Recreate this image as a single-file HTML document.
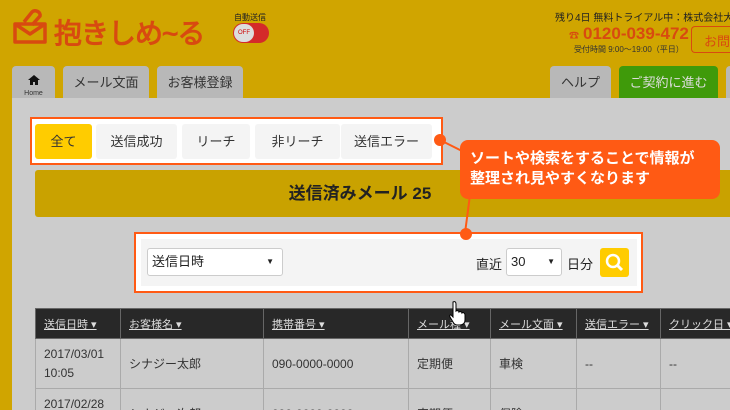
<!DOCTYPE html><html><head><meta charset="utf-8"><style>
*{box-sizing:border-box;margin:0;padding:0}
html,body{width:730px;height:410px;overflow:hidden}
body{background:#d0a500;font-family:"Liberation Sans","Noto Sans CJK JP",sans-serif;position:relative;color:#222}
.a{position:absolute}
.tab{position:absolute;top:66px;height:33px;background:#b8b8b8;border-radius:4px 4px 0 0;font-size:13px;color:#333;text-align:center;line-height:33px}
.btn{position:absolute;top:124px;height:35px;background:#f4f4f4;border-radius:3px;font-size:13px;text-align:center;line-height:35px;color:#333}
table{border-collapse:collapse;font-size:12px}
td,th{border:1px solid #aaa;padding:0 8px;text-align:left;vertical-align:middle}
th{background:#282828;color:#ddd;font-weight:normal;font-size:11px;text-decoration:underline;height:30px;border-color:#666}
td{height:50px;color:#333}
</style></head><body>
<svg class="a" style="left:12px;top:8px" width="36" height="38" viewBox="0 0 36 38"><path d="M3 16h30v18H3z M3 16l15 10 15-10" fill="none" stroke="#d84a10" stroke-width="3.5" stroke-linejoin="round"/><path d="M12 14l8-10c3-3 9 0 8 4l-8 9" fill="none" stroke="#d84a10" stroke-width="3.5"/></svg>
<div class="a" style="left:54px;top:12px;font-size:28px;color:#d84a10;letter-spacing:-1px;-webkit-text-stroke:1px #d84a10">抱きしめ~る</div>
<div class="a" style="left:234px;top:12px;font-size:8px;color:#222">自動送信</div>
<div class="a" style="left:233px;top:23px;width:36px;height:20px;border-radius:10px;background:#d42a2a"></div>
<div class="a" style="left:234px;top:24px;width:20px;height:18px;border-radius:9px;background:#ddd;font-size:6px;color:#c00;line-height:18px;text-align:center">OFF</div>
<div class="a" style="left:555px;top:9px;font-size:10px;white-space:nowrap;color:#222">残り4日 無料トライアル中：株式会社大阪</div>
<div class="a" style="left:569px;top:27px;font-size:10px;color:#d84a10;font-weight:bold">☎</div>
<div class="a" style="left:583px;top:24px;font-size:17px;font-weight:bold;color:#d84a10">0120-039-472</div>
<div class="a" style="left:574px;top:44px;font-size:8px;color:#333">受付時間 9:00〜19:00（平日）</div>
<div class="a" style="left:691px;top:26px;width:39px;height:27px;border:1px solid #d84a10;border-right:none;border-radius:4px 0 0 4px;font-size:13px;color:#d84a10;padding:4px 0 0 12px;overflow:hidden;white-space:nowrap">お問</div>
<div class="tab" style="left:12px;width:43px;line-height:10px;padding-top:9px;font-size:7px"><svg width="12" height="10" viewBox="0 0 12 10"><path d="M6 0L0 5h2v5h3V7h2v3h3V5h2z" fill="#111"/></svg><br>Home</div>
<div class="tab" style="left:63px;width:86px">メール文面</div>
<div class="tab" style="left:157px;width:86px">お客様登録</div>
<div class="tab" style="left:550px;width:61px">ヘルプ</div>
<div class="tab" style="left:619px;width:99px;background:#3f9a0a;color:#ddd">ご契約に進む</div>
<div class="tab" style="left:726px;width:4px;border-radius:4px 0 0 0"></div>
<div class="a" style="left:12px;top:98px;width:718px;height:312px;background:#cccccc"></div>
<div class="a" style="left:30px;top:117px;width:413px;height:48px;background:#fff;border:2px solid #ff5a14"></div>
<div class="btn" style="left:35px;width:57px;background:#ffcc00">全て</div>
<div class="btn" style="left:96px;width:81px">送信成功</div>
<div class="btn" style="left:182px;width:68px">リーチ</div>
<div class="btn" style="left:255px;width:85px">非リーチ</div>
<div class="btn" style="left:341px;width:91px">送信エラー</div>
<div class="a" style="left:35px;top:170px;width:695px;height:47px;background:#c9a200;border-radius:3px 0 0 3px;font-size:17px;font-weight:bold;text-align:center;line-height:47px;padding-right:45px">送信済みメール 25</div>
<div class="a" style="left:134px;top:232px;width:509px;height:61px;background:#fff;border:2px solid #ff5a14"></div>
<div class="a" style="left:141px;top:239px;width:496px;height:47px;background:#f4f4f4"></div>
<div class="a" style="left:147px;top:248px;width:136px;height:28px;background:#fff;border:1px solid #ccc;border-radius:3px;font-size:13px;line-height:26px;padding:0 4px">送信日時<span style="position:absolute;right:8px;top:0;font-size:8px">▼</span></div>
<div class="a" style="left:476px;top:254px;font-size:13px">直近</div>
<div class="a" style="left:506px;top:248px;width:56px;height:28px;background:#fff;border:1px solid #ccc;border-radius:3px;font-size:13px;line-height:26px;padding:0 4px">30<span style="position:absolute;right:6px;top:0;font-size:8px">▼</span></div>
<div class="a" style="left:567px;top:254px;font-size:13px">日分</div>
<div class="a" style="left:600px;top:248px;width:29px;height:29px;background:#ffcc00;border-radius:3px"><svg width="29" height="29"><circle cx="13" cy="13" r="6" fill="none" stroke="#fff" stroke-width="2.5"/><path d="M17 17l5 5" stroke="#fff" stroke-width="3"/></svg></div>
<svg class="a" style="left:0;top:0" width="730" height="410"><path d="M440 140L470 155M470 195L465 233" stroke="#ff5a14" stroke-width="2"/><circle cx="440" cy="140" r="6" fill="#ff5a14"/><circle cx="466" cy="234" r="6" fill="#ff5a14"/></svg>
<div class="a" style="left:460px;top:140px;width:260px;height:59px;background:#ff5a14;border-radius:8px;color:#fff;font-size:15px;font-weight:bold;line-height:20px;padding:9px 0 0 10px;white-space:nowrap">ソートや検索をすることで情報が<br>整理され見やすくなります</div>
<div class="a" style="left:35px;top:308px;width:695px;height:102px;overflow:hidden">
<table style="width:720px">
<tr><th style="width:85px">送信日時 ▾</th><th style="width:143px">お客様名 ▾</th><th style="width:145px">携帯番号 ▾</th><th style="width:82px">メール種 ▾</th><th style="width:86px">メール文面 ▾</th><th style="width:84px">送信エラー ▾</th><th>クリック日 ▾</th></tr>
<tr><td style="line-height:19px">2017/03/01<br>10:05</td><td>シナジー太郎</td><td>090-0000-0000</td><td>定期便</td><td>車検</td><td>--</td><td>--</td></tr>
<tr><td style="vertical-align:top;padding-top:8px">2017/02/28</td><td>シナジー次郎</td><td>090-0000-0000</td><td>定期便</td><td>保険</td><td></td><td></td></tr>
</table></div>
<svg class="a" style="left:448px;top:300px" width="20" height="26"><path d="M5 2c2-1 3 0 3 2v7c1-1 3 0 3 1 1-1 3 0 3 1 1-1 3 0 3 2v5c0 3-2 5-5 5h-3c-2 0-3-1-4-3l-3-5c-1-2 1-3 2-1l1 1V4z" fill="#fff" stroke="#000" stroke-width="1"/></svg>
</body></html>
